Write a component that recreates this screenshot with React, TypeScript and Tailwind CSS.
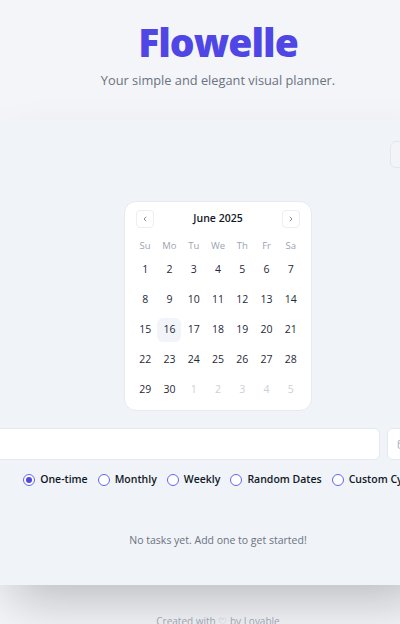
import React from "react";

const font = { fontFamily: '"Open Sans", "Noto Sans", sans-serif' };

function Radio({ label, checked }: { label: string; checked?: boolean }) {
  return (
    <label className="flex items-center gap-[5px] shrink-0">
      <span className="w-[12px] h-[12px] rounded-full border border-[#6366f1] flex items-center justify-center bg-white">
        {checked && <span className="w-[6px] h-[6px] rounded-full bg-[#4f46e5]" />}
      </span>
      <span className="text-[10.5px] font-semibold text-[#111827] whitespace-nowrap">{label}</span>
    </label>
  );
}

const weeks: { d: number; out?: boolean }[][] = [
  [1, 2, 3, 4, 5, 6, 7].map((d) => ({ d })),
  [8, 9, 10, 11, 12, 13, 14].map((d) => ({ d })),
  [15, 16, 17, 18, 19, 20, 21].map((d) => ({ d })),
  [22, 23, 24, 25, 26, 27, 28].map((d) => ({ d })),
  [
    { d: 29 },
    { d: 30 },
    { d: 1, out: true },
    { d: 2, out: true },
    { d: 3, out: true },
    { d: 4, out: true },
    { d: 5, out: true },
  ],
];

function Calendar() {
  return (
    <div className="w-[188px] bg-white rounded-xl border border-[#e6e9ef] px-[8px] pt-[8px] pb-[8px]">
      <div className="flex items-center justify-between px-[3px] h-[18px]">
        <button className="w-[18px] h-[18px] rounded border border-[#eceef2] flex items-center justify-center text-[#6b7280]">
          <svg width="8" height="8" viewBox="0 0 24 24" fill="none" stroke="currentColor" strokeWidth="2.5" strokeLinecap="round" strokeLinejoin="round"><path d="M15 18l-6-6 6-6" /></svg>
        </button>
        <span className="text-[10.5px] font-semibold text-[#111827]">June 2025</span>
        <button className="w-[18px] h-[18px] rounded border border-[#eceef2] flex items-center justify-center text-[#6b7280]">
          <svg width="8" height="8" viewBox="0 0 24 24" fill="none" stroke="currentColor" strokeWidth="2.5" strokeLinecap="round" strokeLinejoin="round"><path d="M9 18l6-6-6-6" /></svg>
        </button>
      </div>
      <div className="grid grid-cols-7 mt-[8px] h-5 items-center">
        {["Su", "Mo", "Tu", "We", "Th", "Fr", "Sa"].map((w) => (
          <div key={w} className="text-center text-[9.5px] text-[#9ca3af]">{w}</div>
        ))}
      </div>
      <div className="mt-[2px] flex flex-col gap-[6px]">
        {weeks.map((row, i) => (
          <div key={i} className="grid grid-cols-7">
            {row.map((c, j) => (
              <div key={j} className="flex justify-center">
                <div
                  className={
                    "w-[24px] h-[24px] rounded-md flex items-center justify-center text-[10.5px] " +
                    (c.out ? "text-[#cbd0d8] " : "text-[#1f2937] ") +
                    (c.d === 16 && !c.out ? "bg-[#f1f4f8]" : "")
                  }
                >
                  {c.d}
                </div>
              </div>
            ))}
          </div>
        ))}
      </div>
    </div>
  );
}

export default function App() {
  return (
    <div className="w-[400px] h-[624px] overflow-hidden bg-[#f3f5f9]" style={font}>
      <div className="w-[436px] flex flex-col">
        <header className="h-[120px] flex flex-col items-center pt-[18px]">
          <h1 className="text-[39px] leading-[48px] font-extrabold tracking-tight text-[#4f46e5]">Flowelle</h1>
          <p className="mt-[5px] text-[12.8px] text-[#6b7280]">Your simple and elegant visual planner.</p>
        </header>
        <main className="h-[465px] bg-[#f0f3f8] shadow-2xl flex flex-col">
          <div className="flex justify-end pt-[21px] pr-[6px]">
            <button className="w-[40px] h-[27px] rounded-md border border-[#e3e6ec] bg-[#f2f4f8]" />
          </div>
          <div className="flex justify-center mt-[33px]">
            <Calendar />
          </div>
          <div className="flex gap-[7px] -mx-[8px] mt-[17px] h-[32px]">
            <div className="flex-1 bg-white rounded-md border border-[#e5e8ee]" />
            <button className="w-[57px] bg-white rounded-md border border-[#e5e8ee] flex items-center pl-[9px] text-[#9ca3af]">
              <svg width="10" height="10" viewBox="0 0 24 24" fill="none" stroke="currentColor" strokeWidth="2"><rect x="3" y="4" width="18" height="18" rx="2" /><path d="M16 2v4M8 2v4M3 10h18" /></svg>
            </button>
          </div>
          <div className="flex justify-center gap-[10px] mt-[12px] pl-[4px] whitespace-nowrap">
            <Radio label="One-time" checked />
            <Radio label="Monthly" />
            <Radio label="Weekly" />
            <Radio label="Random Dates" />
            <Radio label="Custom Cycle" />
          </div>
          <p className="text-center text-[10.5px] text-[#6b7280] mt-[45px]">No tasks yet. Add one to get started!</p>
        </main>
        <footer className="text-center text-[10px] text-[#9ca3af] mt-[29px]">Created with ♡ by Lovable</footer>
      </div>
    </div>
  );
}
